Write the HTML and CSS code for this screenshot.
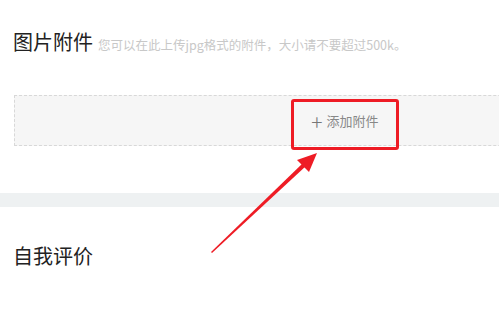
FILE: index.html
```html
<!DOCTYPE html>
<html lang="zh-CN">
<head>
<meta charset="UTF-8">
<title>图片附件</title>
<link rel="stylesheet" href="styles.css">
</head>
<body>

<div class="page">

<section class="attach">
<div class="attach-head">
<h3>图片附件</h3>
<span class="tip">您可以在此上传jpg格式的附件，大小请不要超过500k。</span>
</div>
<div class="upload">
<button class="add-btn"><span class="plus">+</span>添加附件</button>
</div>
</section>

<div class="divider"></div>

<section class="intro">
<h3>自我评价</h3>
</section>

<!-- annotation marks -->
<div class="mark-box"></div>
<svg class="mark-arrow" width="499" height="323" viewBox="0 0 499 323">
<polygon points="211,252 303,163 306,166 212,253" fill="#ee1c25"/>
<polygon points="317,153 297,160 309,172" fill="#ee1c25"/>
</svg>

</div>

</body>
</html>
```

FILE: styles.css
```css
body{margin:0;background:#fff;font-family:"Noto Sans CJK SC","Microsoft YaHei",sans-serif;color:#333;overflow:hidden}
.page{position:relative;width:499px;height:323px;overflow:hidden}
.attach{padding:27px 0 0 13px}
.attach-head{display:flex;align-items:baseline;gap:5px;height:31px}
h3{margin:0;font-size:20px;font-weight:400;color:#222;line-height:30px}
.tip{font-size:12.5px;color:#c8c8c8;line-height:18px}
.upload{margin-top:37px;margin-left:1px;width:660px;height:49px;background:#f6f6f6;border:1px dashed #d8d8d8;display:flex;align-items:center;justify-content:center}
.add-btn{background:none;border:none;padding:0;font-family:inherit;font-size:13px;color:#888;display:flex;align-items:center;gap:4px}
.plus{font-size:21px;font-weight:300;line-height:14px;color:#777}
.divider{margin-top:47px;height:14px;background:#eef1f2}
.intro{padding:34px 0 0 13px}
.mark-box{position:absolute;left:291px;top:99px;width:102px;height:45px;border:3px solid #ee1c25;border-radius:3px}
.mark-arrow{position:absolute;left:0;top:0}
```
